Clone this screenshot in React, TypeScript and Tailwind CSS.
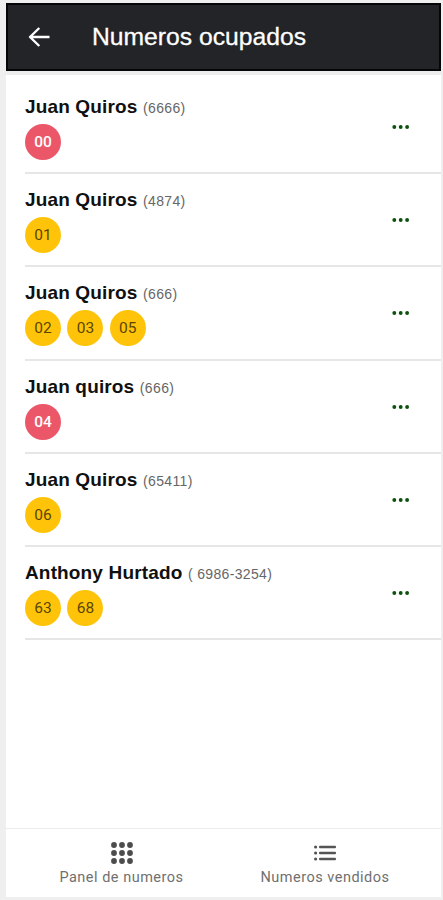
import React from "react";

type Row = { name: string; phone: string; numbers: string[]; sold?: boolean; height: string };

const rows: Row[] = [
  { name: "Juan Quiros", phone: "(6666)", numbers: ["00"], sold: true, height: "h-[93px]" },
  { name: "Juan Quiros", phone: "(4874)", numbers: ["01"], height: "h-[93px]" },
  { name: "Juan Quiros", phone: "(666)", numbers: ["02", "03", "05"], height: "h-[94px]" },
  { name: "Juan quiros", phone: "(666)", numbers: ["04"], sold: true, height: "h-[93px]" },
  { name: "Juan Quiros", phone: "(65411)", numbers: ["06"], height: "h-[93px]" },
  { name: "Anthony Hurtado", phone: "( 6986-3254)", numbers: ["63", "68"], height: "h-[93px]" },
];

function BackArrow() {
  return (
    <svg className="h-[22px] w-[23px]" viewBox="0 0 23 22" fill="none" stroke="#fff" strokeWidth="2.4" strokeLinejoin="round">
      <path d="M11.3 2 2 11 11.3 20M2 11H21.5" />
    </svg>
  );
}

function MoreDots() {
  return (
    <svg className="h-1 w-[18px]" viewBox="0 0 18 4" fill="#0b520f">
      <circle cx="2.3" cy="2" r="1.95" />
      <circle cx="8.7" cy="2" r="1.95" />
      <circle cx="15.1" cy="2" r="1.95" />
    </svg>
  );
}

function KeypadIcon() {
  return (
    <svg className="h-[22px] w-[22px]" viewBox="0 0 22 22" fill="#4c4c4c">
      {[3, 11, 19].map((y) => [3, 11, 19].map((x) => <circle key={`${x}-${y}`} cx={x} cy={y} r="2.9" />))}
    </svg>
  );
}

function ListIcon() {
  return (
    <svg className="h-[22px] w-[22px]" viewBox="0 0 22 22" fill="#555">
      {[5, 11, 17].map((y) => (
        <g key={y}>
          <circle cx="1.6" cy={y} r="1.6" />
          <rect x="5" y={y - 1.2} width="17" height="2.4" rx="1" />
        </g>
      ))}
    </svg>
  );
}

export default function App() {
  return (
    <div className="h-[900px] w-[443px] overflow-hidden bg-[#efefef] pt-[3px] pl-[6px] font-['Liberation_Sans',Arial,sans-serif]">
      <div className="flex h-[894px] w-[435px] flex-col bg-white">
        <header className="flex h-[68px] shrink-0 items-center border-2 border-[#050607] bg-[#222428] pl-[20px] text-white">
          <BackArrow />
          <h1 className="ml-[41px] text-[24.7px] leading-[30px] whitespace-nowrap [-webkit-text-stroke:0.3px_white]">Numeros ocupados</h1>
        </header>
        <div className="h-[10px] shrink-0 border-t-4 border-[#ededed]" />
        <main className="flex-1">
          {rows.map((row, i) => (
            <section key={i} className={`${row.height} ml-[19px] flex justify-between border-b-2 border-[#e6e6e6] pt-[15px]`}>
              <div>
                <div className="h-[24px] leading-[22px] whitespace-nowrap">
                  <span className="text-[19px] font-bold tracking-[0.15px] text-[#101010]">{row.name}</span>
                  <span className="ml-[5.5px] text-[14px] tracking-[0.35px] text-[#666]">{row.phone}</span>
                </div>
                <div className="mt-1 flex gap-[6.4px]">
                  {row.numbers.map((n) => (
                    <span
                      key={n}
                      className={`flex size-9 items-center justify-center rounded-full pt-px font-[Roboto,sans-serif] text-[15.5px] ${
                        row.sold ? "bg-[#eb5769] font-medium text-white" : "bg-[#ffc409] text-[#5a4600]"
                      }`}
                    >
                      {n}
                    </span>
                  ))}
                </div>
              </div>
              <button aria-label="Opciones" className="mt-[29px] mr-[31px] h-1">
                <MoreDots />
              </button>
            </section>
          ))}
        </main>
        <nav className="flex h-[69px] shrink-0 border-t border-[#ececec] font-[Roboto,sans-serif] text-[14.5px] leading-[18px] tracking-[0.5px] text-[#707070]">
          <div className="flex w-[231px] flex-col items-center pt-[13px]">
            <KeypadIcon />
            <span className="mt-[5px]">Panel de numeros</span>
          </div>
          <div className="flex w-[176px] flex-col items-center pt-[13px]">
            <ListIcon />
            <span className="mt-[5px] whitespace-nowrap">Numeros vendidos</span>
          </div>
        </nav>
      </div>
    </div>
  );
}
